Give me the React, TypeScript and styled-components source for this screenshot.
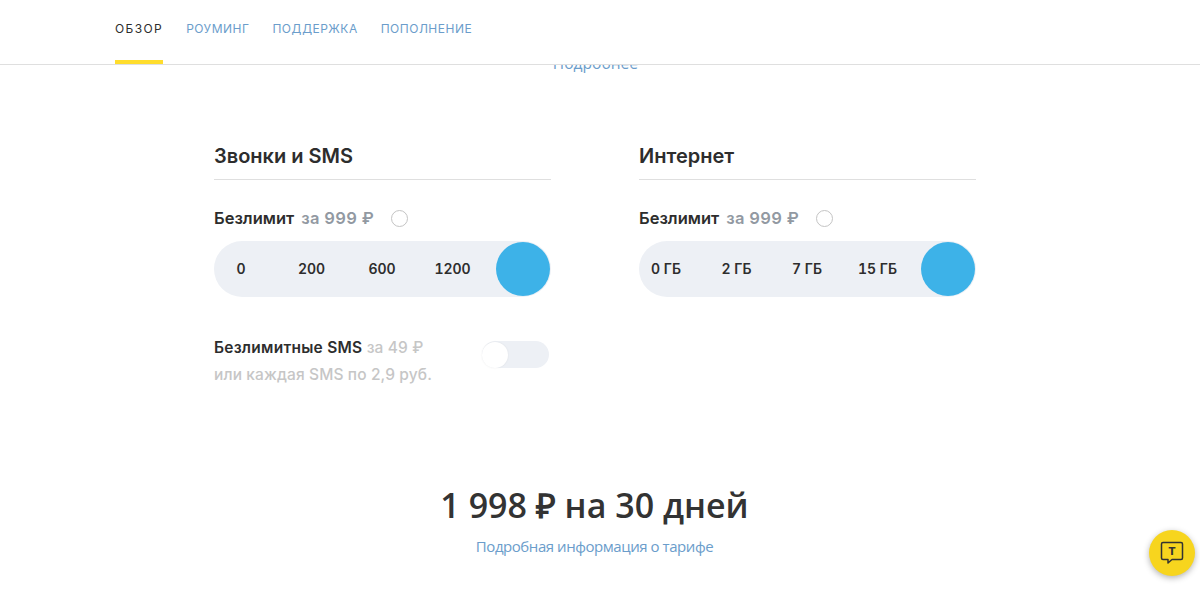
import styled, { createGlobalStyle } from 'styled-components';

const GlobalStyle = createGlobalStyle`
  html, body {
    margin: 0;
    height: 590px;
    overflow: hidden;
    background: #fff;
  }
  body {
    font-family: Inter, "Liberation Sans", sans-serif;
    color: #2d2d2d;
  }
`;

const Page = styled.div`
  position: relative;
  width: 1200px;
  height: 590px;
  overflow: hidden;
`;

const Nav = styled.nav`
  display: flex;
  gap: 23px;
  height: 64px;
  padding-left: 115px;
  border-bottom: 1px solid #dfdfdf;
`;

const NavItem = styled.a<{ $active?: boolean }>`
  box-sizing: border-box;
  height: 64px;
  padding-top: 21px;
  font-size: 12px;
  line-height: 15px;
  letter-spacing: ${(p) => (p.$active ? '1.4px' : '0.5px')};
  color: ${(p) => (p.$active ? '#2d2d2d' : '#6b9dcb')};
  border-bottom: 4px solid ${(p) => (p.$active ? '#ffdd2d' : 'transparent')};
`;

const Peek = styled.div`
  display: flex;
  align-items: flex-end;
  justify-content: center;
  width: 1191px;
  height: 8px;
  overflow: hidden;
`;

const PeekLink = styled.a`
  font-family: "Open Sans", sans-serif;
  font-size: 15.6px;
  line-height: 20px;
  color: #6b9dcb;
`;

const Columns = styled.div`
  display: flex;
  gap: 88px;
  padding: 72px 0 0 214px;
`;

const Column = styled.section`
  width: 337px;
`;

const Heading = styled.h2`
  margin: 0;
  height: 34px;
  font-size: 20px;
  line-height: 22px;
  font-weight: 600;
  color: #2d2d2d;
  border-bottom: 1px solid #dfdfdf;
`;

const OptionRow = styled.div`
  display: flex;
  align-items: center;
  margin-top: 28px;
  height: 20px;
  font-size: 16.5px;
  font-weight: 600;
  font-variant-numeric: tabular-nums;
`;

const OptionPrice = styled.span`
  margin-left: 7px;
  letter-spacing: 0.25px;
  color: #9299a2;
`;

const Radio = styled.span`
  box-sizing: border-box;
  width: 17px;
  height: 17px;
  margin-left: 17px;
  border: 1px solid #c4c4c4;
  border-radius: 50%;
  background: #fff;
`;

const Track = styled.div`
  box-sizing: border-box;
  display: flex;
  align-items: center;
  justify-content: space-between;
  width: 337px;
  height: 56px;
  margin-top: 13px;
  padding: 0 1px 0 0;
  border-radius: 28px;
  background: #edf0f5;
`;

const Mark = styled.span`
  width: 54px;
  padding-bottom: 2px;
  text-align: center;
  white-space: nowrap;
  font-size: 14px;
  font-weight: 600;
  font-variant-numeric: tabular-nums;
  color: #2d2d2d;
`;

const Thumb = styled.span`
  width: 54px;
  height: 54px;
  border-radius: 50%;
  background: #3db2e8;
`;

const SmsRow = styled.div`
  display: flex;
  justify-content: space-between;
  width: 335px;
  margin-top: 37px;
`;

const SmsText = styled.div`
  font-size: 15.5px;
  font-weight: 500;
  line-height: 27px;
  letter-spacing: 0.12px;
  color: #c6c6c6;
`;

const SmsTitle = styled.span`
  font-weight: 600;
  letter-spacing: 0.25px;
  color: #2d2d2d;
`;

const Toggle = styled.span`
  display: flex;
  align-items: center;
  width: 67px;
  height: 27px;
  margin-top: 7px;
  border-radius: 14px;
  background: #edf0f5;
`;

const ToggleKnob = styled.span`
  width: 26px;
  height: 26px;
  border-radius: 50%;
  background: #fff;
  box-shadow: 0 0 2px rgba(0, 0, 0, 0.08);
`;

const Summary = styled.div`
  display: flex;
  flex-direction: column;
  align-items: center;
  width: 1189px;
  margin-top: 94px;
`;

const Total = styled.div`
  font-family: "Open Sans", sans-serif;
  font-size: 34px;
  line-height: 46px;
  font-weight: 600;
  color: #333;
`;

const SummaryLink = styled.a`
  margin-top: 8px;
  font-family: "Open Sans", sans-serif;
  font-size: 15px;
  line-height: 20px;
  letter-spacing: -0.45px;
  color: #6b9dcb;
`;

const ChatButton = styled.button`
  position: absolute;
  left: 1149px;
  top: 530px;
  display: flex;
  align-items: center;
  justify-content: center;
  width: 46px;
  height: 46px;
  padding: 0;
  border: 0;
  border-radius: 50%;
  background: #f7d51e;
  box-shadow: 0 2px 6px rgba(0, 0, 0, 0.3);
`;

function ChatIcon() {
  return (
    <svg width="26" height="26" viewBox="0 0 26 26" fill="none">
      <path
        d="M4 2.5h18a1.5 1.5 0 0 1 1.500 1.500v14a1.500 1.500 0 0 1-1.500 1.500H13l-4 3.500v-3.500H4A1.500 1.500 0 0 1 2.500 18V4A1.500 1.500 0 0 1 4 2.500z"
        stroke="#333"
        strokeWidth="1.500"
        strokeLinejoin="round"
      />
      <text x="13" y="15" textAnchor="middle" fontSize="11" fontWeight="800" fill="#333" fontFamily="Inter, sans-serif">
        Т
      </text>
    </svg>
  );
}

function Slider({ marks }: { marks: string[] }) {
  return (
    <Track>
      {marks.map((m) => (
        <Mark key={m}>{m}</Mark>
      ))}
      <Thumb />
    </Track>
  );
}

export default function App() {
  return (
    <Page>
      <GlobalStyle />
      <Nav>
        <NavItem $active>ОБЗОР</NavItem>
        <NavItem>РОУМИНГ</NavItem>
        <NavItem>ПОДДЕРЖКА</NavItem>
        <NavItem>ПОПОЛНЕНИЕ</NavItem>
      </Nav>
      <Peek>
        <PeekLink>Подробнее</PeekLink>
      </Peek>
      <Columns>
        <Column>
          <Heading>Звонки и SMS</Heading>
          <OptionRow>
            Безлимит
            <OptionPrice>за 999 ₽</OptionPrice>
            <Radio />
          </OptionRow>
          <Slider marks={['0', '200', '600', '1200']} />
          <SmsRow>
            <SmsText>
              <SmsTitle>Безлимитные SMS</SmsTitle> за 49 ₽
              <br />
              или каждая SMS по 2,9 руб.
            </SmsText>
            <Toggle>
              <ToggleKnob />
            </Toggle>
          </SmsRow>
        </Column>
        <Column>
          <Heading>Интернет</Heading>
          <OptionRow>
            Безлимит
            <OptionPrice>за 999 ₽</OptionPrice>
            <Radio />
          </OptionRow>
          <Slider marks={['0 ГБ', '2 ГБ', '7 ГБ', '15 ГБ']} />
        </Column>
      </Columns>
      <Summary>
        <Total>1 998 ₽ на 30 дней</Total>
        <SummaryLink>Подробная информация о тарифе</SummaryLink>
      </Summary>
      <ChatButton>
        <ChatIcon />
      </ChatButton>
    </Page>
  );
}
